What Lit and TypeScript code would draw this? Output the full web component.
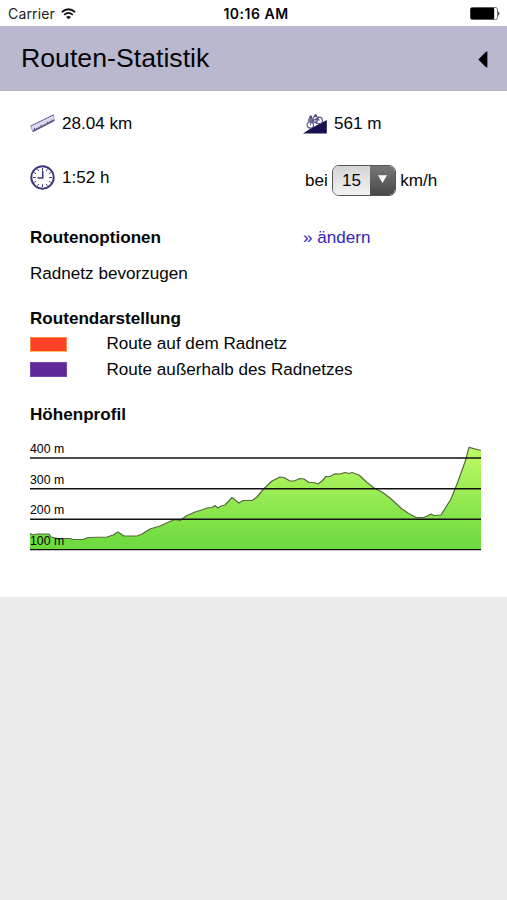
import { LitElement, html, css, svg } from "lit";
import { customElement } from "lit/decorators.js";

const PROFILE: [number, number][] = [
  [0, 93.5], [3, 95], [7, 94], [19, 94], [21, 97], [28, 98.5], [40, 98.5], [43, 99.5], [53, 99.5],
  [58, 97.5], [77, 97], [83, 95], [88, 92], [94, 96], [107, 96], [112, 94], [120, 89], [130, 86],
  [141, 81], [145, 79.5], [150, 80.5], [157, 75.5], [165, 72], [173, 69.5], [177, 68], [182, 67.5],
  [185, 65.5], [188, 68], [191, 66], [195, 65], [202, 57.5], [209, 63], [213, 60.5], [222, 60.5],
  [227, 57], [234, 48.5], [242, 41], [250, 37], [254, 37.5], [260, 41], [264, 41], [270, 38.5],
  [274, 39], [279, 42.5], [284, 42.5], [288, 44], [292, 41], [296, 36.5], [300, 36.5], [305, 33.8],
  [310, 34], [315, 32.5], [319, 33.5], [322, 32.5], [329, 35], [337, 42.5], [344, 48], [352, 52],
  [360, 58], [372, 69], [378, 73], [386, 77.5], [394, 77.5], [401, 74], [404, 75.5], [411, 75],
  [421, 59], [427, 44], [435, 22], [439, 7.3], [451, 10.5],
];
const LEVELS = [
  { y: 18, label: "400 m" },
  { y: 48.7, label: "300 m" },
  { y: 79.2, label: "200 m" },
  { y: 109.6, label: "100 m" },
];

@customElement("elevation-chart")
export class ElevationChart extends LitElement {
  static styles = css`
    :host { display: block; }
    svg { display: block; overflow: visible; }
    .label { font: 12.3px "Liberation Sans", Arial, sans-serif; fill: #000; }
    .line { stroke: #111; stroke-width: 1.4; }
    .curve { fill: none; stroke: #56683f; stroke-width: 1.2; stroke-linejoin: round; }
  `;
  render() {
    const pts = PROFILE.map((p) => p.join(",")).join(" ");
    return html`<svg width="451" height="111" viewBox="0 0 451 111">
      <defs>
        <linearGradient id="g" gradientUnits="userSpaceOnUse" x1="0" y1="7" x2="0" y2="110">
          <stop offset="0" stop-color="#c0fb66" />
          <stop offset="1" stop-color="#69d93c" />
        </linearGradient>
      </defs>
      <polygon points="0,110 ${pts} 451,110" fill="url(#g)" />
      <polyline class="curve" points=${pts} />
      ${LEVELS.map(
        (l) => svg`<line class="line" x1="0" x2="451" y1=${l.y} y2=${l.y} />
          <text class="label" x="0" y=${l.y - 5}>${l.label}</text>`
      )}
    </svg>`;
  }
}

@customElement("app-root")
export class AppRoot extends LitElement {
  static styles = css`
    :host {
      display: flex; flex-direction: column; height: 900px; background: #ebebeb;
      font: 17.1px/20px "Liberation Sans", Arial, sans-serif; color: #050505;
    }
    svg { display: block; flex: none; }
    .status {
      display: grid; grid-template-columns: 1fr auto 1fr; align-items: center; height: 25.5px;
      padding: 2px 7px 0 8px; box-sizing: border-box; background: #fff;
      font: 14px/20px Inter, sans-serif;
    }
    .carrier { display: flex; align-items: center; gap: 6px; color: #222; letter-spacing: 0.15px; }
    .time { font-weight: 600; font-size: 14px; letter-spacing: 0.5px; padding-left: 4px; }
    .battery { justify-self: end; }
    .header {
      display: flex; align-items: center; justify-content: space-between; height: 65px;
      box-sizing: border-box; padding: 1px 19px 0 21px; background: #bab8cf;
    }
    .title { margin: -2px 0 0; font-weight: 400; font-size: 26.7px; line-height: 30px; }
    .back { margin-top: 2px; }
    .panel { height: 506.5px; box-sizing: border-box; background: #fff; padding: 13.5px 26px 0 30px; }
    .pair { display: grid; grid-template-columns: 273px 1fr; align-items: center; height: 40px; }
    .item { display: flex; align-items: center; }
    .distance { gap: 7px; }
    .climb { gap: 7px; }
    .distance svg, .climb svg { margin-bottom: 1px; }
    .duration { gap: 7px; padding-bottom: 5px; }
    .duration svg { margin-bottom: 1px; }
    .speed { gap: 4.5px; padding-left: 2px; }
    .second { margin-top: 16.5px; }
    .select {
      display: flex; width: 63.5px; height: 31px; box-sizing: border-box; border: 1.5px solid #555;
      border-radius: 7px; overflow: hidden;
    }
    .value {
      flex: 1; text-align: center; line-height: 30px;
      background: linear-gradient(#d4d4d4, #f2f2f2);
    }
    .arrow {
      display: flex; width: 25px; justify-content: center; padding-top: 9px; box-sizing: border-box;
      background: linear-gradient(#777, #484848);
    }
    .options { height: 20px; margin-top: 27.5px; }
    .heading { margin: 0; font-size: 17.1px; line-height: 20px; font-weight: 700; }
    .link { color: #3324bd; text-decoration: none; }
    .text { margin: 16px 0 25px; }
    .legend { display: grid; grid-template-columns: 76.5px 1fr; align-items: center; height: 25.5px; }
    .legends { padding-top: 2.5px; }
    .swatch { width: 37px; height: 15.5px; box-sizing: border-box; }
    .red { background: #ff4128; border: 1px solid #ff8a45; border-bottom-color: #ffc05e; }
    .violet { height: 15px; background: #5f289b; border: 1px solid #7544ad; margin-bottom: 1px; }
    .profile { margin-top: 22.5px; }
    .chart { margin-top: 14.5px; }
  `;

  render() {
    return html`
      <div class="status">
        <div class="carrier">
          <span>Carrier</span>
          <svg width="15" height="12" viewBox="0 0 15 12" fill="none" stroke="#111" stroke-width="1.8">
            <path d="M.8 4.2Q7.5-1.8 14.2 4.2M3.2 6.8Q7.5 3 11.8 6.8" />
            <path d="M7.5 11.3 5 8.9Q7.5 6.9 10 8.9Z" fill="#111" stroke="none" />
          </svg>
        </div>
        <span class="time">10:16 AM</span>
        <svg class="battery" width="30" height="13" viewBox="0 0 30 13">
          <rect x=".5" y=".5" width="27" height="12" rx="2" fill="#fff" stroke="#777" />
          <rect x=".5" y=".8" width="23.7" height="11.4" rx="1.2" />
          <path d="M28.2 4.2q2.4 2.3 0 4.6z" fill="#222" />
        </svg>
      </div>
      <header class="header">
        <h1 class="title">Routen-Statistik</h1>
        <svg class="back" width="10" height="17" viewBox="0 0 10 17"><path d="M.3 8.5 8 .8 9.4.4V16.6L8 16.2Z" /></svg>
      </header>
      <main class="panel">
        <div class="pair">
          <div class="item distance">
            <svg width="25" height="19" viewBox="0 0 25 19" fill="none" stroke="#5f5b91">
              <path d="M.8 11.8 23.5.8 24.3 6.5 2.7 17.7Z" fill="#dedcee" stroke="#8c88b4" stroke-width=".8" />
              <path d="M1 12 23.5 1" stroke-width="1" stroke-dasharray="1.5 .6" />
              <path d="M2.8 17.3 24.3 6.2" stroke-width="1.6" />
              <path d="M4.2 14l.8 2.2M6.4 14l.5 1.4M8.5 12.8l.6 1.6M10.7 11l.8 2.2M13 10.6l.6 1.6M15.2 9.6l.5 1.4M17.3 7.7l.8 2.2M19.5 7.3l.6 1.6M21.6 5.6l.8 2" stroke-width="1.1" />
            </svg>
            <span>28.04 km</span>
          </div>
          <div class="item climb">
            <svg width="24" height="20" viewBox="0 0 24 20">
              <path d="M0 19.5 8 14.3 23.8 6V19.5Z" fill="#17124f" />
              <g fill="none" stroke="#5a568c" stroke-width="1.2">
                <circle cx="7.3" cy="11" r="3.2" />
                <circle cx="16.2" cy="6.4" r="3.2" />
                <path d="M7.3 11 8.5 6.8 13.4 9.1 15 4.4 16.2 6.6M8.5 6.8 15 4.4M5.3 7.5 6.5 4.2 10 5.4 11.5 9M9.5 5.2 11.8 1.8 15 3.5" />
              </g>
              <path d="M4.8 6.5Q5.5 3.4 8 3L10.4 5.1 6.8 8Z" fill="#77739e" />
              <circle cx="7.7" cy="2.9" r="1.4" fill="#4a467d" />
              <circle cx="12.6" cy="1.6" r="1.4" fill="#4a467d" />
            </svg>
            <span>561 m</span>
          </div>
        </div>
        <div class="pair second">
          <div class="item duration">
            <svg width="25" height="25" viewBox="0 0 25 25" fill="none" stroke="#3c3778">
              <circle cx="12.5" cy="12.5" r="11.2" stroke-width="1.9" />
              <path d="M12.5 3v2.8M12.5 19.2V22M3 12.5h2.8M19.2 12.5H22M7.7 4.3l1 1.7M17.3 4.3l-1 1.7M4.3 7.7l1.7 1M20.7 7.7l-1.7 1M4.3 17.3l1.7-1M20.7 17.3l-1.7-1M7.7 20.7l1-1.7M17.3 20.7l-1-1.7" stroke-width="1" />
              <path d="M12.7 6v7H7.5" stroke-width="1.5" />
            </svg>
            <span>1:52 h</span>
          </div>
          <div class="item speed">
            <span>bei</span>
            <div class="select">
              <span class="value">15</span>
              <span class="arrow"><svg width="9" height="8" viewBox="0 0 9 8"><path d="M0 .3H9L4.5 8Z" fill="#fff" /></svg></span>
            </div>
            <span>km/h</span>
          </div>
        </div>
        <div class="pair options">
          <h2 class="heading">Routenoptionen</h2>
          <a class="link">» ändern</a>
        </div>
        <p class="text">Radnetz bevorzugen</p>
        <h2 class="heading">Routendarstellung</h2>
        <div class="legends">
          <div class="legend"><span class="swatch red"></span><span>Route auf dem Radnetz</span></div>
          <div class="legend"><span class="swatch violet"></span><span>Route außerhalb des Radnetzes</span></div>
        </div>
        <h2 class="heading profile">Höhenprofil</h2>
        <elevation-chart class="chart"></elevation-chart>
      </main>
    `;
  }
}
